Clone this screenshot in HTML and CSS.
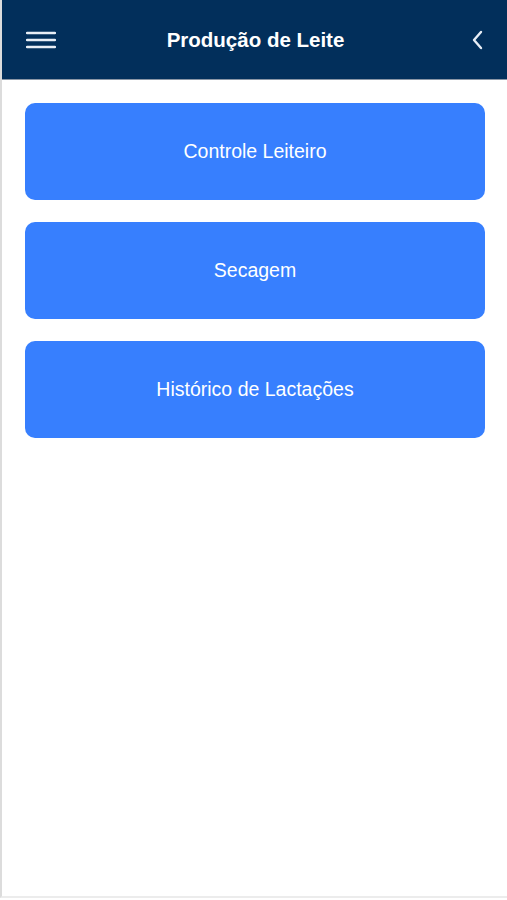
FILE: index.html
```html
<!DOCTYPE html>
<html lang="pt">
<head>
    <meta charset="UTF-8">
    <meta name="viewport" content="width=device-width, initial-scale=1.0">
    <title>Produção de Leite</title>
    <link rel="stylesheet" href="styles.css">
</head>
<body>
    <div class="tela">
        <header class="barra">
            <button class="barra-btn" aria-label="Menu">
                <svg width="30" height="18" viewBox="0 0 30 18">
                    <path d="M1 2H29M1 9H29M1 16H29" stroke="#e8eef6" stroke-width="2.4" stroke-linecap="round"/>
                </svg>
            </button>
            <h1 class="barra-titulo">Produção de Leite</h1>
            <button class="barra-btn barra-btn-voltar" aria-label="Voltar">
                <svg width="14" height="20" viewBox="0 0 14 20">
                    <path d="M10 2L3 10L10 18" fill="none" stroke="#e8eef6" stroke-width="2.4" stroke-linecap="round" stroke-linejoin="round"/>
                </svg>
            </button>
        </header>

        <main class="conteudo">
            <button class="opcao">Controle Leiteiro</button>
            <button class="opcao">Secagem</button>
            <button class="opcao">Histórico de Lactações</button>
        </main>
    </div>
</body>
</html>
```

FILE: styles.css
```css
html, body {
    margin: 0;
    padding: 0;
    height: 100%;
}
body {
    background-color: #ffffff;
    font-family: "Liberation Sans", Arial, sans-serif;
}
.tela {
    box-sizing: border-box;
    height: 898px;
    border-left: 2px solid #dcdcdc;
    border-bottom: 2px solid #ececec;
    display: flex;
    flex-direction: column;
}
.barra {
    height: 79px;
    background-color: #022f5b;
    border-bottom: 1px solid #8a96a6;
    display: grid;
    grid-template-columns: 1fr auto 1fr;
    align-items: center;
    padding: 0 22px 0 24px;
}
.barra-btn {
    background: none;
    border: none;
    padding: 0;
    display: flex;
    align-items: center;
    cursor: pointer;
}
.barra-btn-voltar {
    justify-self: end;
}
.barra-titulo {
    margin: 0;
    color: #ffffff;
    font-size: 20.5px;
    font-weight: bold;
}
.conteudo {
    display: flex;
    flex-direction: column;
    gap: 22px;
    padding: 23px 22px 0 23px;
}
.opcao {
    height: 97px;
    background-color: #377ffe;
    color: #ffffff;
    border: none;
    border-radius: 10px;
    font-family: "Liberation Sans", Arial, sans-serif;
    font-size: 19.5px;
    cursor: pointer;
}
```
